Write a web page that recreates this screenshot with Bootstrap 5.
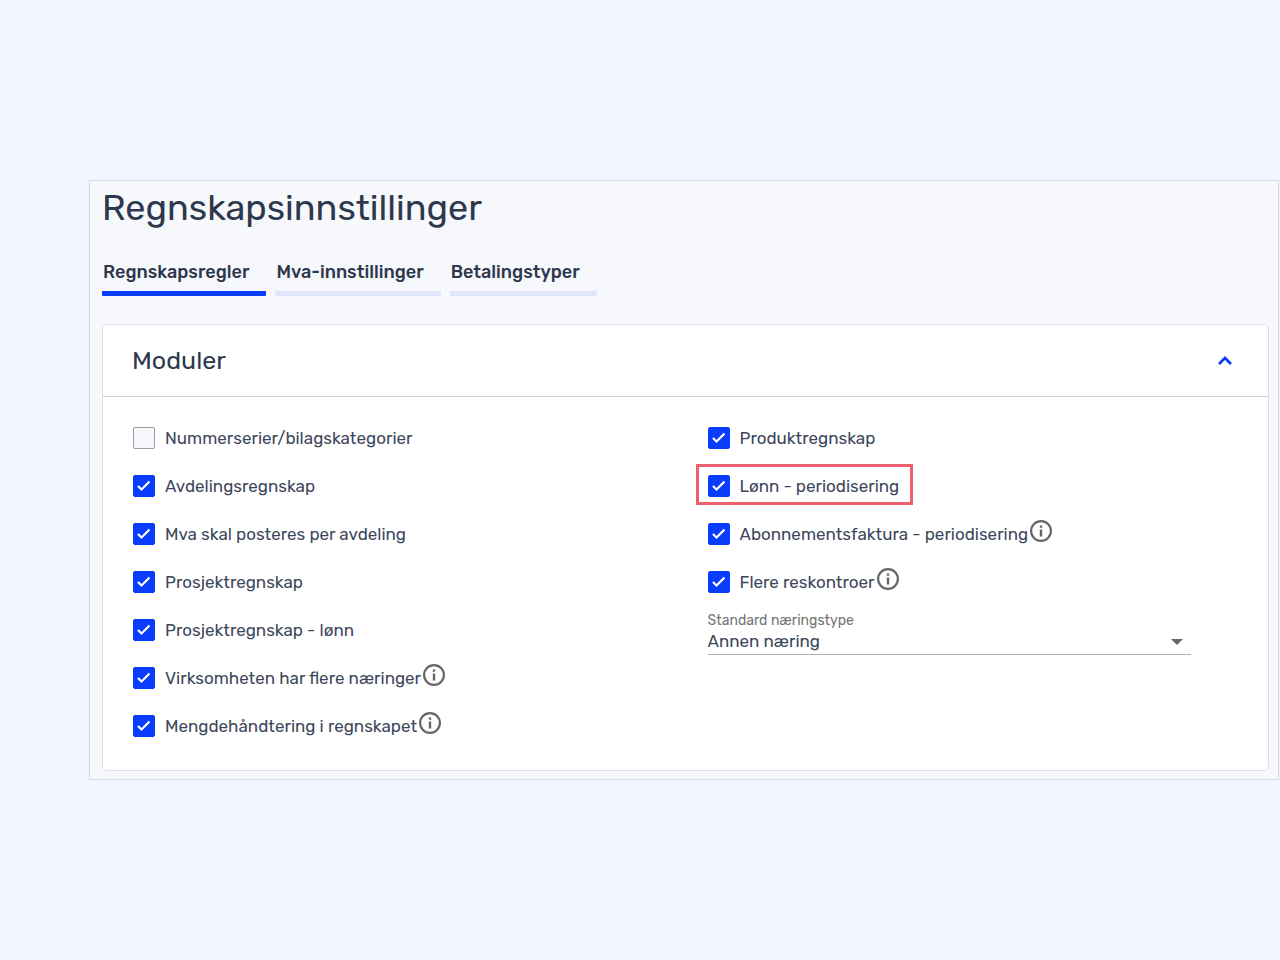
<!DOCTYPE html>
<html lang="nb">
<head>
<meta charset="utf-8">
<meta name="viewport" content="width=device-width, initial-scale=1">
<title>Regnskapsinnstillinger</title>
<link href="https://cdn.jsdelivr.net/npm/bootstrap@5.3.0/dist/css/bootstrap.min.css" rel="stylesheet">
<style>
  body { background: #f2f4ff; color: #2e384d; font-family: Rubik, Roboto, "Liberation Sans", sans-serif; }
  .page-shell { padding-left: 89px; padding-right: 1px; }
  .settings { background: #f7f8fc; border: 1px solid #d8dbe2; padding: 0 9px 8px 12px; }
  .settings-title { font-size: 36px; line-height: 44px; font-weight: 400; padding-top: 5px; margin-bottom: 30px; }
  .settings-tabs { gap: 9px; margin-bottom: 28px; }
  .settings-tabs .nav-link { color: #2e384d; font-size: 18px; line-height: 24px; font-weight: 500; padding: 0 17px 7px 1px; border-bottom: 5px solid #dfe5fb; border-radius: 1px; }
  .settings-tabs .nav-link.active { border-color: #0a3cff; }
  .module-card { border: 1px solid #dcdfe4; border-radius: 5px; }
  .module-card .card-header { background: #fff; border-bottom: 1px solid #cdcfd3; padding: 0 30px 0 29px; height: 72px; }
  .module-title { font-size: 25px; line-height: 32px; font-weight: 400; }
  .module-body { padding: 17px 0 20px 16px; }
  .module-col { padding-left: 14px; }
  .module-col-end { padding-right: 77px; }
  .option { height: 48px; color: #3d475c; font-size: 17px; line-height: 24px; }
  .option .form-check-input { width: 22px; height: 22px; margin: 0 10px 0 0; border: 1px solid #989ca6; border-radius: 2px; background-color: #f7f8fc; flex: none; }
  .option .form-check-input:checked { background-color: #0a3cff; border-color: #0a3cff; background-size: 18px 18px; background-image: url("data:image/svg+xml,%3csvg xmlns='http://www.w3.org/2000/svg' viewBox='0 0 18 18'%3e%3cpath fill='none' stroke='%23fff' stroke-width='2.2' d='M3 9l3.500 3.500L14.500 4.500'/%3e%3c/svg%3e"); }
  .info-btn { margin: 0 0 7px 2px; color: #666; line-height: 0; }
  .marked { position: relative; }
  .marked::after { content: ""; position: absolute; inset: 2px auto 5px -12px; width: 217px; border: 3px solid #ef5f6d; pointer-events: none; }
  .field { padding-top: 6px; }
  .field-label { color: #757575; font-size: 14px; line-height: 17px; }
  .field-select { appearance: none; color: #3d475c; font-size: 17px; line-height: 24px; height: 26px; padding: 0 30px 2px 0; border: 0; border-bottom: 1px solid #b0b2b6; border-radius: 0; background: #fff url("data:image/svg+xml,%3csvg xmlns='http://www.w3.org/2000/svg' viewBox='0 0 12 6'%3e%3cpath fill='%23666' d='M0 0h12L6 6z'/%3e%3c/svg%3e") no-repeat right 8px center / 12px 6px; }
</style>
</head>
<body>
<div class="page-shell min-vh-100 d-flex align-items-center">
  <main class="settings w-100">
    <h1 class="settings-title">Regnskapsinnstillinger</h1>
    <nav class="nav settings-tabs">
      <a class="nav-link active" href="#regler" aria-current="page">Regnskapsregler</a>
      <a class="nav-link" href="#mva">Mva-innstillinger</a>
      <a class="nav-link" href="#betaling">Betalingstyper</a>
    </nav>
    <section class="card module-card">
      <div class="card-header d-flex align-items-center justify-content-between">
        <h2 class="module-title mb-0">Moduler</h2>
        <button type="button" class="btn p-0 border-0 d-flex" aria-label="Skjul moduler" data-bs-toggle="collapse" data-bs-target="#moduler">
          <svg width="26" height="26" viewBox="0 0 26 26" fill="none" stroke="#0a3cff" stroke-width="2.800"><path d="M7 16l6-6 6 6"/></svg>
        </button>
      </div>
      <div id="moduler" class="collapse show">
        <div class="module-body">
          <div class="row g-0">
            <div class="col-6 module-col">
              <div class="option d-flex align-items-center"><input class="form-check-input" type="checkbox" id="m1"><label for="m1">Nummerserier/bilagskategorier</label></div>
              <div class="option d-flex align-items-center"><input class="form-check-input" type="checkbox" id="m2" checked><label for="m2">Avdelingsregnskap</label></div>
              <div class="option d-flex align-items-center"><input class="form-check-input" type="checkbox" id="m3" checked><label for="m3">Mva skal posteres per avdeling</label></div>
              <div class="option d-flex align-items-center"><input class="form-check-input" type="checkbox" id="m4" checked><label for="m4">Prosjektregnskap</label></div>
              <div class="option d-flex align-items-center"><input class="form-check-input" type="checkbox" id="m5" checked><label for="m5">Prosjektregnskap - lønn</label></div>
              <div class="option d-flex align-items-center"><input class="form-check-input" type="checkbox" id="m6" checked><label for="m6">Virksomheten har flere næringer</label>
                <button type="button" class="btn p-0 border-0 info-btn" aria-label="Informasjon"><svg width="22" height="22" viewBox="0 0 22 22"><circle cx="11" cy="11" r="9.900" fill="none" stroke="currentColor" stroke-width="2.200"/><path fill="currentColor" d="M9.800 5.500h2.400v2.300H9.800zM9.800 9.500h2.400v7H9.800z"/></svg></button></div>
              <div class="option d-flex align-items-center"><input class="form-check-input" type="checkbox" id="m7" checked><label for="m7">Mengdehåndtering i regnskapet</label>
                <button type="button" class="btn p-0 border-0 info-btn" aria-label="Informasjon"><svg width="22" height="22" viewBox="0 0 22 22"><circle cx="11" cy="11" r="9.900" fill="none" stroke="currentColor" stroke-width="2.200"/><path fill="currentColor" d="M9.800 5.500h2.400v2.300H9.800zM9.800 9.500h2.400v7H9.800z"/></svg></button></div>
            </div>
            <div class="col-6 module-col module-col-end">
              <div class="option d-flex align-items-center"><input class="form-check-input" type="checkbox" id="m8" checked><label for="m8">Produktregnskap</label></div>
              <div class="option d-flex align-items-center marked"><input class="form-check-input" type="checkbox" id="m9" checked><label for="m9">Lønn - periodisering</label></div>
              <div class="option d-flex align-items-center"><input class="form-check-input" type="checkbox" id="m10" checked><label for="m10">Abonnementsfaktura - periodisering</label>
                <button type="button" class="btn p-0 border-0 info-btn" aria-label="Informasjon"><svg width="22" height="22" viewBox="0 0 22 22"><circle cx="11" cy="11" r="9.900" fill="none" stroke="currentColor" stroke-width="2.200"/><path fill="currentColor" d="M9.800 5.500h2.400v2.300H9.800zM9.800 9.500h2.400v7H9.800z"/></svg></button></div>
              <div class="option d-flex align-items-center"><input class="form-check-input" type="checkbox" id="m11" checked><label for="m11">Flere reskontroer</label>
                <button type="button" class="btn p-0 border-0 info-btn" aria-label="Informasjon"><svg width="22" height="22" viewBox="0 0 22 22"><circle cx="11" cy="11" r="9.900" fill="none" stroke="currentColor" stroke-width="2.200"/><path fill="currentColor" d="M9.800 5.500h2.400v2.300H9.800zM9.800 9.500h2.400v7H9.800z"/></svg></button></div>
              <div class="field">
                <label class="field-label d-block" for="naering">Standard næringstype</label>
                <select class="field-select w-100 d-block" id="naering"><option>Annen næring</option></select>
              </div>
            </div>
          </div>
        </div>
      </div>
    </section>
  </main>
</div>
<script src="https://cdn.jsdelivr.net/npm/bootstrap@5.3.0/dist/js/bootstrap.bundle.min.js"></script>
</body>
</html>
